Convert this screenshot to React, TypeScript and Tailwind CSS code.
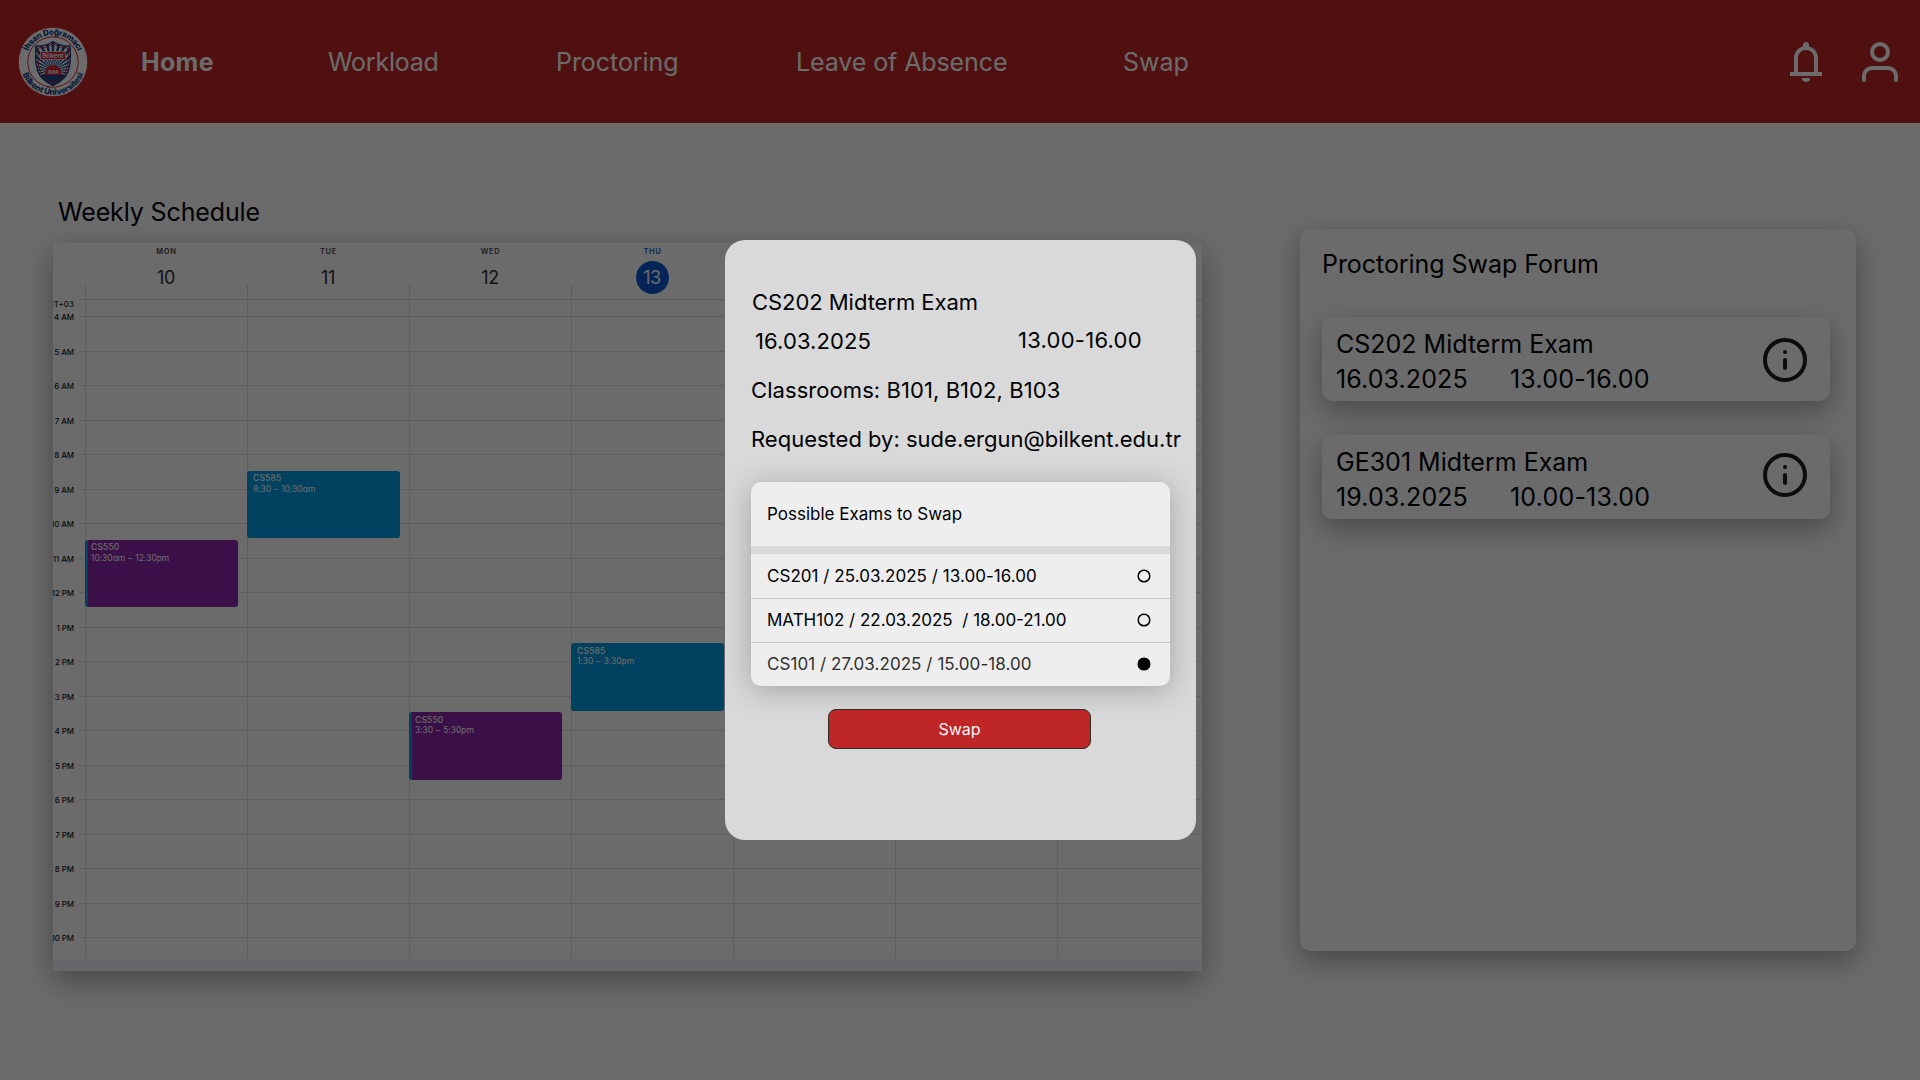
import React from "react";

const navItems = [
  { label: "Home", cls: "w-[187px] font-bold tracking-[0.3px]" },
  { label: "Workload", cls: "w-[228px] tracking-[-0.25px]" },
  { label: "Proctoring", cls: "w-[240px] tracking-[-0.05px]" },
  { label: "Leave of Absence", cls: "w-[327px] tracking-[-0.1px]" },
  { label: "Swap", cls: "" },
];

const hours = [
  "4 AM", "5 AM", "6 AM", "7 AM", "8 AM", "9 AM", "10 AM", "11 AM", "12 PM",
  "1 PM", "2 PM", "3 PM", "4 PM", "5 PM", "6 PM", "7 PM", "8 PM", "9 PM", "10 PM",
];

type CalendarEvent = { title: string; time: string; start: number; kind: "blue" | "purple" };

const days: { name: string; date: string; today?: boolean; event?: CalendarEvent }[] = [
  { name: "MON", date: "10", event: { title: "CS550", time: "10:30am – 12:30pm", start: 10.5, kind: "purple" } },
  { name: "TUE", date: "11", event: { title: "CS585", time: "8:30 – 10:30am", start: 8.5, kind: "blue" } },
  { name: "WED", date: "12", event: { title: "CS550", time: "3:30 – 5:30pm", start: 15.5, kind: "purple" } },
  { name: "THU", date: "13", today: true, event: { title: "CS585", time: "1:30 – 3:30pm", start: 13.5, kind: "blue" } },
  { name: "FRI", date: "14" },
  { name: "SAT", date: "15" },
  { name: "SUN", date: "16" },
];

const HOUR_HEIGHT = 34.5;

function Logo() {
  const rays = Array.from({ length: 28 }, (_, i) => (i * 360) / 28);
  return (
    <svg width="72" height="72" viewBox="0 0 72 72" className="ml-[17px] shrink-0">
      <defs>
        <path id="ring-top" d="M8.8 36 A27.2 27.2 0 0 1 63.2 36" />
        <path id="ring-bottom" d="M3.2 36 A32.8 32.8 0 0 0 68.8 36" />
        <clipPath id="shield">
          <path d="M36 15.5 Q43 20.5 53 20 Q55 44 47 52 Q42 57 36 59.5 Q30 57 25 52 Q17 44 19 20 Q29 20.5 36 15.5Z" />
        </clipPath>
      </defs>
      <circle cx="36" cy="36" r="34.8" fill="#fff" stroke="#d92231" strokeWidth="1" />
      <circle cx="36" cy="36" r="25.2" fill="none" stroke="#d92231" strokeWidth="1" />
      <g clipPath="url(#shield)">
        <rect x="16" y="12" width="40" height="50" fill="#fff" />
        {rays.map((a) => (
          <path key={a} d="M36 44 L33.7 4 L38.3 4Z" fill="#134a8e" transform={`rotate(${a} 36 44)`} />
        ))}
        <path d="M16 49 H56 V62 H16Z" fill="#134a8e" />
        <path d="M28 46 a8 7 0 0 1 16 0Z" fill="#d92231" />
      </g>
      <path
        d="M36 15.5 Q43 20.5 53 20 Q55 44 47 52 Q42 57 36 59.5 Q30 57 25 52 Q17 44 19 20 Q29 20.5 36 15.5Z"
        fill="none" stroke="#134a8e" strokeWidth="1.4"
      />
      <path
        d="M36 18 Q43 22.3 51 22 Q52.7 43 45.7 50.5 Q41.5 55 36 57.3 Q30.5 55 26.3 50.5 Q19.3 43 21 22 Q29 22.3 36 18Z"
        fill="none" stroke="#d92231" strokeWidth="1"
      />
      <rect x="23.5" y="25.5" width="25" height="8" fill="#d92231" stroke="#fff" strokeWidth="0.6" />
      <text x="36" y="32" textAnchor="middle" fontSize="6.5" fontWeight="600" fill="#fff">Bilkent</text>
      <rect x="28" y="45" width="16" height="4" fill="#d92231" />
      <text x="36" y="48" textAnchor="middle" fontSize="4.5" fontWeight="700" fill="#fff">1984</text>
      <text fontSize="8" fontWeight="800" fill="#0f3f85">
        <textPath href="#ring-top" startOffset="50%" textAnchor="middle" textLength="63">İhsan Doğramacı</textPath>
      </text>
      <text fontSize="8.2" fontWeight="800" fill="#0f3f85">
        <textPath href="#ring-bottom" startOffset="50%" textAnchor="middle" textLength="78">Bilkent Üniversitesi</textPath>
      </text>
    </svg>
  );
}

function BellIcon() {
  return (
    <svg width="32" height="40" viewBox="0 0 32 40" fill="none">
      <path d="M6 31V16a10 10 0 0 1 20 0v15" stroke="#fff" strokeWidth="4" />
      <path d="M0 30h32v4H0z" fill="#fff" />
      <path d="M13 6V3a3 3 0 0 1 6 0v3z" fill="#fff" />
      <path d="M12 36h8a4 4 0 0 1-8 0z" fill="#fff" />
    </svg>
  );
}

function UserIcon() {
  return (
    <svg width="36" height="40" viewBox="0 0 36 40" fill="none" stroke="#fff" strokeWidth="4" strokeLinecap="round">
      <circle cx="18" cy="10" r="8" />
      <path d="M2 38v-4a8 8 0 0 1 8-8h16a8 8 0 0 1 8 8v4" />
    </svg>
  );
}

function InfoIcon() {
  return (
    <svg width="44" height="44" viewBox="0 0 44 44" fill="none" stroke="#1e1e1e" strokeWidth="4" strokeLinecap="round">
      <circle cx="22" cy="22" r="20" />
      <path d="M22 30v-8M22 14h.02" />
    </svg>
  );
}

function Header() {
  return (
    <header className="flex h-[123px] items-center bg-[#bf2626] text-[25px] text-white">
      <Logo />
      <nav className="mt-[3px] ml-[52px] flex flex-1">
        {navItems.map((n) => (
          <a key={n.label} className={"whitespace-nowrap " + n.cls}>{n.label}</a>
        ))}
      </nav>
      <div className="mr-[22px] flex gap-10">
        <BellIcon />
        <UserIcon />
      </div>
    </header>
  );
}

function EventBlock({ event }: { event: CalendarEvent }) {
  const purple = event.kind === "purple";
  return (
    <div
      className={
        "absolute -left-px h-[67.5px] w-[153px] overflow-hidden rounded-[3px] pt-[2.5px] text-[8.5px] leading-[10.3px] text-white [font-feature-settings:'cv11'] " +
        (purple ? "border-l-[3px] border-[#039be5] bg-[#8e24aa] pl-[3px]" : "bg-[#039be5] pl-[6px]")
      }
      style={{ top: 16.5 + (event.start - 4) * HOUR_HEIGHT }}
    >
      <p className="font-medium tracking-[0.15px]">{event.title}</p>
      <p className="tracking-[-0.05px] [word-spacing:0.6px]">{event.time}</p>
    </div>
  );
}

function Calendar() {
  return (
    <div className="flex h-[728px] w-[1149px] flex-col overflow-hidden bg-white shadow-[0_10px_30px_rgba(0,0,0,0.35)]">
      <div className="flex h-[56px] shrink-0 pl-8">
        {days.map((d) => (
          <div key={d.name} className="flex h-full w-[162px] shrink-0 flex-col items-center">
            <p className={"mt-1 ml-px h-[11px] text-[7.5px] leading-[10px] font-semibold tracking-[0.7px] " + (d.today ? "text-[#0b57d0]" : "text-[#444746]")}>
              {d.name}
            </p>
            <p
              className={
                "mt-[2.5px] flex size-[33px] shrink-0 items-center justify-center rounded-full text-[18px] tracking-[-0.4px] " +
                (d.today ? "bg-[#0b57d0] text-white" : "text-[#303134]")
              }
            >
              {d.date}
            </p>
            <div className="-mt-[8.5px] h-[14px] w-full border-l border-[#dadce0]" />
          </div>
        ))}
      </div>
      <div className="relative h-[660px] shrink-0">
        <div className="ml-[26px] border-t border-[#dadce0]" />
        <div className="flex h-[16px] w-[21px] items-start justify-end text-[8px] leading-[9px] whitespace-nowrap font-medium text-[#303134]">
          GMT+03
        </div>
        {hours.map((h) => (
          <div key={h} className="flex h-[34.5px] last:h-[22px]">
            <span className="-mt-1 flex h-[10px] w-[21px] items-center justify-end text-[8px] leading-[10px] font-medium tracking-[-0.1px] whitespace-nowrap text-[#202124]">
              {h}
            </span>
            <div className="ml-[5px] flex-1 border-t border-[#dfe1e5]" />
          </div>
        ))}
        <div className="absolute inset-y-0 left-8 flex">
          {days.map((d) => (
            <div key={d.name} className="relative w-[162px] shrink-0 border-l border-[#dfe1e5]">
              {d.event && <EventBlock event={d.event} />}
            </div>
          ))}
        </div>
      </div>
      <div className="relative flex-1 bg-[#f5f5fb]" />
    </div>
  );
}

const forum = [
  { title: "CS202 Midterm Exam", date: "16.03.2025", time: "13.00-16.00", icon: "mt-[21px]" },
  { title: "GE301 Midterm Exam", date: "19.03.2025", time: "10.00-13.00", icon: "mt-[18px]" },
];

function SwapForum() {
  return (
    <section className="mt-[106px] ml-[98px] h-[722px] w-[556px] rounded-[10px] bg-white px-[22px] pt-5 text-[25px] leading-[30px] text-black shadow-[0_10px_30px_rgba(0,0,0,0.35)]">
      <h2 className="tracking-[-0.05px]">Proctoring Swap Forum</h2>
      <div className="mt-[38px] flex flex-col gap-[34px]">
        {forum.map((f) => (
          <article key={f.title} className="flex h-[84px] w-[508px] rounded-[10px] bg-white shadow-[0_10px_28px_rgba(0,0,0,0.32)]">
            <div className="w-[441px] pt-[12px] pl-[14px]">
              <p>{f.title}</p>
              <p className="mt-[5px] flex">
                <span className="w-[174px] tracking-[0.1px]">{f.date}</span>
                <span className="tracking-[0.2px]">{f.time}</span>
              </p>
            </div>
            <div className={f.icon}>
              <InfoIcon />
            </div>
          </article>
        ))}
      </div>
    </section>
  );
}

const options = [
  { text: "CS201 / 25.03.2025 / 13.00-16.00", cls: "text-black tracking-[0.04px]" },
  { text: "MATH102 / 22.03.2025  / 18.00-21.00", cls: "border-t pb-[2px] text-black" },
  { text: "CS101 / 27.03.2025 / 15.00-18.00", cls: "border-t pb-[2px] text-[#303030] tracking-[0.06px]", selected: true },
];

function SwapModal() {
  return (
    <div className="flex h-[600px] w-[471px] flex-col rounded-[20px] bg-[#d9d9d9] pl-[26px] text-[22px] leading-[26px] text-black">
      <p className="mt-[49px] ml-px tracking-[-0.05px]">CS202 Midterm Exam</p>
      <div className="mt-[12px] flex">
        <p className="mt-px ml-[4px] w-[263px] tracking-[0.1px]">16.03.2025</p>
        <p className="tracking-[0.25px]">13.00-16.00</p>
      </div>
      <p className="mt-[23px] tracking-[0.07px]">Classrooms: B101, B102, B103</p>
      <p className="mt-[23px] whitespace-nowrap">Requested by: sude.ergun@bilkent.edu.tr</p>
      <div className="mt-[30px] w-[419px] overflow-hidden rounded-[10px] bg-[#eeeeee] text-[17px] shadow-[0_4px_30px_rgba(0,0,0,0.25)]">
        <p className="flex h-16 items-center pl-4">Possible Exams to Swap</p>
        <div className="h-2 bg-[#d9d9d9]" />
        {options.map((o) => (
          <div key={o.text} className={"flex h-11 items-center justify-between border-[#c8c8c8] pr-[19px] pl-4 whitespace-pre " + o.cls}>
            <span>{o.text}</span>
            <svg width="14" height="14" viewBox="0 0 14 14" fill={o.selected ? "#000" : "none"} stroke="#000" strokeWidth="1.5">
              <circle cx="7" cy="7" r="5.8" />
            </svg>
          </div>
        ))}
      </div>
      <button className="mt-[23px] ml-[77px] h-10 w-[263px] rounded-[8px] border border-[#2c2c2c] bg-[#bf2626] text-[16px] text-[#f5f5f5]">
        Swap
      </button>
    </div>
  );
}

export default function App() {
  return (
    <div className="relative h-[1080px] w-[1920px] overflow-hidden bg-white font-['Inter',sans-serif]">
      <Header />
      <main className="flex pl-[53px]">
        <section>
          <h1 className="mt-[74px] mb-[16px] ml-[5px] text-[25px] leading-[30px] tracking-[-0.13px] text-black">Weekly Schedule</h1>
          <Calendar />
        </section>
        <SwapForum />
      </main>
      <div className="absolute inset-0 bg-black/58 pt-[240px] pl-[725px]">
        <SwapModal />
      </div>
    </div>
  );
}
